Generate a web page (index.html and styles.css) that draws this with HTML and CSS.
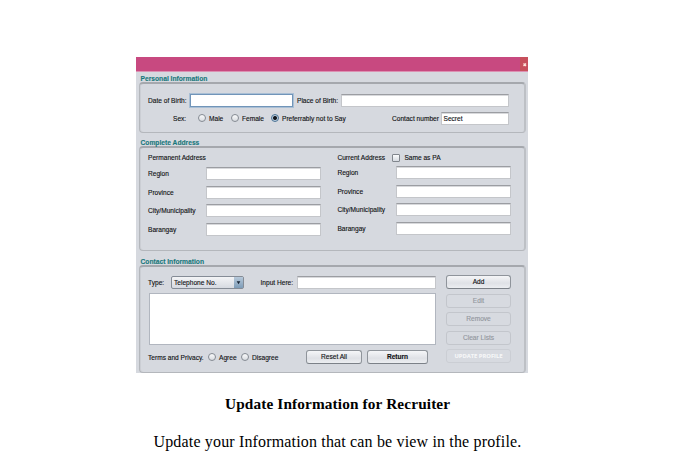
FILE: index.html
```html
<!DOCTYPE html>
<html lang="en">
<head>
<meta charset="utf-8">
<title>Update Information for Recruiter</title>
<link rel="stylesheet" href="styles.css">
</head>
<body>
<main class="window">
  <header class="titlebar"><span class="close"><svg viewBox="0 0 8 14"><path d="M3.5 6.5L6 9M6 6.5L3.5 9" stroke="#ffe2d8" stroke-width="1.4"/></svg></span></header>

  <h2 class="legend">Personal Information</h2>
  <section class="panel personal">
    <div class="row">
      <label class="label dob">Date of Birth:</label><span class="field focus dob-field"></span>
      <label class="label pob">Place of Birth:</label><span class="field pob-field"></span>
    </div>
    <div class="row second">
      <span class="label sex">Sex:</span>
      <span class="choice male"><i class="radio"></i>Male</span>
      <span class="choice female"><i class="radio"></i>Female</span>
      <span class="choice secret"><i class="radio checked"></i>Preferrably not to Say</span>
      <label class="label number">Contact number</label><span class="field number-field">Secret</span>
    </div>
  </section>

  <h2 class="legend">Complete Address</h2>
  <section class="panel address">
    <div class="column permanent">
      <div class="heading">Permanent Address</div>
      <div class="entry"><label>Region</label><span class="field"></span></div>
      <div class="entry"><label>Province</label><span class="field"></span></div>
      <div class="entry"><label>City/Municipality</label><span class="field"></span></div>
      <div class="entry"><label>Barangay</label><span class="field"></span></div>
    </div>
    <div class="column current">
      <div class="heading"><span class="current-title">Current Address</span><i class="checkbox"></i>Same as PA</div>
      <div class="entry"><label>Region</label><span class="field"></span></div>
      <div class="entry"><label>Province</label><span class="field"></span></div>
      <div class="entry"><label>City/Municipality</label><span class="field"></span></div>
      <div class="entry"><label>Barangay</label><span class="field"></span></div>
    </div>
  </section>

  <h2 class="legend">Contact Information</h2>
  <section class="panel contact">
    <div class="main">
      <div class="row">
        <label class="label type">Type:</label>
        <span class="select"><span>Telephone No.</span><span class="arrow"><svg viewBox="0 0 8 12"><path d="M2 4.5H6L4 8Z" fill="#182536"/></svg></span></span>
        <label class="label input">Input Here:</label><span class="field input-field"></span>
      </div>
      <div class="list"></div>
      <div class="row bottom">
        <span class="label terms">Terms and Privacy.</span>
        <span class="choice agree"><i class="radio"></i>Agree</span>
        <span class="choice disagree"><i class="radio"></i>Disagree</span>
        <button class="reset">Reset All</button>
        <button class="return">Return</button>
      </div>
    </div>
    <div class="actions">
      <button>Add</button>
      <button disabled>Edit</button>
      <button disabled>Remove</button>
      <button disabled>Clear Lists</button>
      <button class="update" disabled>UPDATE PROFILE</button>
    </div>
  </section>
</main>
<h1 class="caption">Update Information for Recruiter</h1>
<p class="description">Update your Information that can be view in the profile.</p>
</body>
</html>
```

FILE: styles.css
```css
* { box-sizing: border-box; }
body { margin: 0; background: #fff; height: 461px; overflow: hidden; }
.window {
  width: 392px; height: 316px; margin: 57px 0 0 136px;
  background: #d6d9df; color: #101113;
  font: 6.6px/13px "Liberation Sans", sans-serif;
  -webkit-text-stroke: .12px currentColor;
}
.titlebar { height: 15px; background: #c84980; border-bottom: 1px solid #dc91b3; display: flex; justify-content: flex-end; }
.close { width: 8px; height: 14px; background: #c7505c; }
.close svg { display: block; width: 8px; height: 14px; }
.legend { margin: 0 0 0 4.5px; height: 10px; font-size: 6.7px; line-height: 13px; font-weight: bold; color: #16777b; white-space: nowrap; }
.panel {
  margin: 0 2px 0 3px; border: 1px solid #b4b7bc; border-top: 2px solid #a5a8ad; border-right: 2px solid #bdc0c5;
  border-radius: 4px; box-shadow: inset 1px 0 #cbced4;
}
.personal { height: 51px; padding: 9px 0 0; margin-bottom: 3px; }
.address { height: 105px; display: flex; margin-bottom: 4px; padding-left: 8px; }
.contact { height: 108px; display: flex; padding: 8px 0 0 8px; }
.row { display: flex; height: 14px; align-items: center; white-space: nowrap; }
.second { margin-top: 4px; }
.label { flex: none; }
.field {
  display: block; flex: none; height: 13px; background: #fff;
  border: 1px solid #c4c6ca; border-top: 1px solid #9b9da2; box-shadow: inset 0 1px #d8d9dc;
}
.focus { border: 1px solid #7195b9; height: 13px; box-shadow: 0 0 0 1px #a9bfd5; }
.dob { width: 42px; margin-left: 8px; }
.dob-field { width: 103px; }
.pob { width: 48px; padding-left: 4px; }
.pob-field { width: 168px; }
.sex { width: 25px; margin-left: 33px; }
.choice { display: flex; align-items: center; flex: none; }
.radio { width: 8px; height: 8px; margin-right: 3px; border: 1px solid #858b93; border-radius: 50%; background: linear-gradient(#f9fafb, #d9dce1); }
.checked { border-color: #4b7394; background: radial-gradient(circle, #10151b 0 1.5px, #bccfe0 2.4px); }
.male { width: 33px; }
.female { width: 40px; }
.secret { width: 121px; }
.number { width: 49px; }
.number-field { width: 68px; padding-left: 1.5px; line-height: 12px; }
.column { width: 190px; }
.heading { height: 13px; margin-top: 3px; display: flex; align-items: center; }
.entry { display: flex; height: 18.5px; align-items: flex-start; }
.permanent .heading + .entry { margin-top: 3px; }
.current .heading + .entry { margin-top: 2px; }
.entry label { width: 58px; line-height: 14px; }
.entry .field { width: 115px; }
.current { padding-left: 1.4px; }
.current .entry label { width: 58.6px; }
.current-title { width: 55px; }
.checkbox { width: 8px; height: 8px; margin-right: 4px; border: 1px solid #81868d; border-radius: 1px; background: linear-gradient(#fafbfc, #d7dbe1); }
.main { width: 288px; }
.type { width: 23px; }
.select {
  display: flex; justify-content: space-between; width: 73px; height: 13px; line-height: 12px; padding-left: 2px;
  border: 1px solid #858c96; border-radius: 2px; background: linear-gradient(#f3f4f6, #d6dae1);
}
.arrow { width: 9px; background: linear-gradient(#b7c9da, #7d9cb8); }
.arrow svg { display: block; width: 9px; height: 11px; }
.input { width: 53px; padding-left: 16.5px; }
.input-field { width: 139px; }
.list { height: 52px; margin: 4px 0 5px 1px; background: #fff; border: 1px solid #b1b6bf; }
.terms { width: 60px; }
.agree { width: 33px; }
.disagree { width: 65px; }
button {
  display: block; flex: none; height: 14px; margin: 0; padding: 0; font: inherit; line-height: 12px; color: #101113;
  border: 1px solid #8f949b; border-bottom-color: #7c8188; border-radius: 3px;
  background: linear-gradient(#f5f6f8, #dfe1e6 60%, #eceef1); text-align: center; white-space: nowrap;
}
.reset { width: 56px; }
.return { width: 61px; margin-left: 5px; font-weight: bold; }
.actions { width: 65px; margin-left: 10px; display: flex; flex-direction: column; gap: 4.6px; }
.actions button:disabled { color: #92969d; background: #d7dae0; border-color: #c3c6cc; }
.actions .update:disabled { color: #f6f7f8; font: bold 5.8px/12px "Open Sans", sans-serif; border-color: #cbced4; }
.caption, .description { font-family: "Palatino Linotype", Palatino, "Liberation Serif", serif; color: #000; white-space: nowrap; }
.caption { margin: 21px 0 0 225px; font-size: 15.3px; line-height: 20px; letter-spacing: .13px; }
.description { margin: 18px 0 0 153.5px; font-size: 16px; line-height: 20px; letter-spacing: .16px; }
```
